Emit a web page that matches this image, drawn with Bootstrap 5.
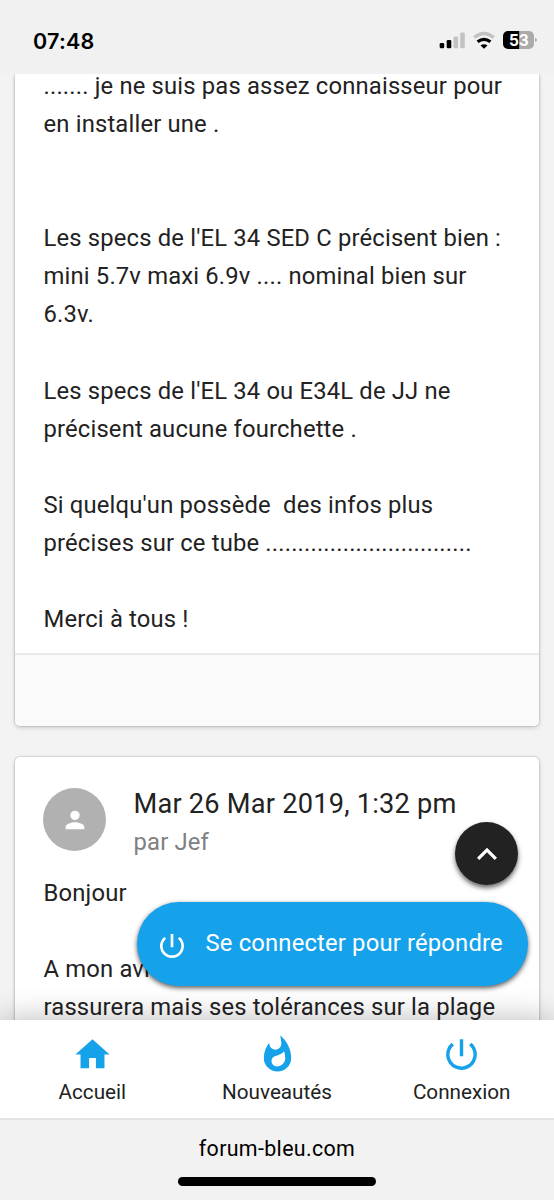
<!DOCTYPE html>
<html lang="fr">
<head>
<meta charset="utf-8">
<meta name="viewport" content="width=device-width, initial-scale=1">
<title>forum-bleu.com</title>
<link rel="stylesheet" href="https://cdn.jsdelivr.net/npm/bootstrap@5.3.0/dist/css/bootstrap.min.css">
<style>
body{font-family:Roboto,sans-serif;font-size:23.8px;line-height:38.06px;color:#222;background:#f3f3f3;letter-spacing:.17px}
.screen{height:1200px}
.statusbar{height:74px;background:#f1f1f1;padding:0 17px 0 33px;font-family:Inter,sans-serif}
.clock{font-size:21.5px;font-weight:600;color:#000;letter-spacing:.25px;padding-top:22px}
.status-icons{margin-top:20px}
.feed{padding:0 15px;height:946px}
.post{border-radius:5px;box-shadow:0 0 0 1px rgba(0,0,0,.05),0 0 3px rgba(0,0,0,.14),0 2px 5px rgba(0,0,0,.14)}
.post-first{height:652px;border-top-left-radius:0;border-top-right-radius:0}
.post-text{padding:0 10px 0 28.500px;white-space:pre-line}
.first-text{margin-top:-7px}
.post-foot{height:73px;background:#fafafa;border-top:2px solid #e9e9e9;border-radius:0 0 5px 5px}
.post-next{margin-top:31px;height:320px}
.post-head{padding:27px 28px 0}
.next-text{margin-top:13px}
.avatar{width:63px;height:63px;background:#b1b1b1}
.meta{margin-left:27.500px}
.date{font-size:27.200px;line-height:40px;letter-spacing:.22px}
.author{color:#808080;line-height:37px}
.fab-top{right:36px;top:822px;width:63px;height:63px;background:#222;box-shadow:0 3px 5px rgba(0,0,0,.6)}
.fab-login{left:137px;top:902px;width:391px;height:84px;background:#16a2ea;box-shadow:0 2px 5px rgba(0,0,0,.65);padding-left:19px}
.fab-login svg{margin-top:3px}
.login-label{margin-left:17.500px;padding-bottom:2px}
.tabs{height:100px;border-bottom:2px solid #e3e3e3;box-shadow:0 0 30px rgba(0,0,0,.28);font-size:20.700px;line-height:24px;letter-spacing:0;padding-top:13.500px}
.tabs svg{display:block;margin:0 auto 5px}
.browserbar{height:80px;background:#f2f2f2;color:#000}
.site{font-size:21.400px;line-height:24px;padding-top:17px;letter-spacing:.35px}
.homebar{width:198px;height:9px;background:#000;margin-top:16px}
</style>
</head>
<body>
<div class="screen position-relative overflow-hidden d-flex flex-column">
<header class="statusbar d-flex justify-content-between flex-shrink-0">
<span class="clock">07:48</span>
<svg class="status-icons" width="99" height="40" viewBox="438 20 99 40">
<g><rect x="439.700" y="43" width="4.500" height="5.300" rx="1.300"/><rect x="446.700" y="40" width="4.600" height="8.300" rx="1.300"/><g fill="#c2c2c2"><rect x="453.500" y="36.500" width="4.600" height="11.800" rx="1.300"/><rect x="460.200" y="32.500" width="4.600" height="15.800" rx="1.300"/></g></g>
<g fill="none" stroke-width="3.200"><path stroke="#c2c2c2" d="M474.300 37.500q9.700-8 19.400 0"/><path stroke="#000" d="M477.600 41.800q6.400-5 12.800 0"/></g><path d="M480.500 45.400q3.500-2.500 7 0L484 48.800z"/>
<path d="M519.500 31H508a5 5 0 0 0-5 5v8a5 5 0 0 0 5 5h11.500z"/><path fill="#ababab" d="M519.500 31h9.500a5 5 0 0 1 5 5v8a5 5 0 0 1-5 5h-9.500zM535 38q2 .5 2 2t-2 2z"/>
<text x="508.900" y="45.700" font-size="15.500" font-weight="700" fill="#fff" letter-spacing="0">53</text>
</svg>
</header>
<main class="feed overflow-hidden flex-shrink-0">
<article class="post post-first bg-white d-flex flex-column">
<div class="post-text first-text flex-grow-1">....... je ne suis pas assez connaisseur pour
en installer une .


Les specs de l'EL 34 SED C précisent bien :
mini 5.7v maxi 6.9v .... nominal bien sur
6.3v.

Les specs de l'EL 34 ou E34L de JJ ne
précisent aucune fourchette .

Si quelqu'un possède&nbsp; des infos plus
précises sur ce tube ................................

Merci à tous !</div>
<div class="post-foot flex-shrink-0"></div>
</article>
<article class="post post-next bg-white">
<div class="post-head d-flex">
<div class="avatar rounded-circle d-flex align-items-center justify-content-center mt-1"><svg width="28" height="28" viewBox="0 0 24 24" fill="#fff"><path d="M12 12a4 4 0 1 0 0-8 4 4 0 0 0 0 8zm0 2c-2.670 0-8 1.340-8 4v2h16v-2c0-2.660-5.330-4-8-4z"/></svg></div>
<div class="meta"><div class="date">Mar 26 Mar 2019, 1:32 pm</div><div class="author">par Jef</div></div>
</div>
<div class="post-text next-text">Bonjour

A mon avis
rassurera mais ses tolérances sur la plage</div>
</article>
</main>
<button class="fab-top position-absolute border-0 rounded-circle d-flex align-items-center justify-content-center p-0" aria-label="Haut"><svg width="40" height="40" viewBox="0 0 24 24" fill="#fff"><path d="M7.400 15.600 12 11l4.600 4.600L18 14.200l-6-6-6 6z"/></svg></button>
<a href="#" class="fab-login position-absolute rounded-pill text-white text-decoration-none d-flex align-items-center"><svg width="32" height="32" viewBox="0 0 24 24" fill="#fff"><path d="M13 3h-2v10h2V3zm4.830 2.170-1.420 1.420A6.920 6.920 0 0 1 19 12a7 7 0 1 1-11.420-5.420L6.170 5.170A9 9 0 1 0 21 12c0-2.740-1.230-5.180-3.170-6.830z"/></svg><span class="login-label">Se connecter pour répondre</span></a>
<nav class="tabs row g-0 bg-white text-center flex-shrink-0 position-relative">
<div class="col"><svg width="41" height="41" viewBox="0 0 24 24" fill="#16a2ea"><path d="M10 20v-6h4v6h5v-8h3L12 3 2 12h3v8z"/></svg><div>Accueil</div></div>
<div class="col"><svg width="41" height="41" viewBox="0 0 24 24" fill="#16a2ea"><path d="M13.500.67s.74 2.650.74 4.800c0 2.060-1.350 3.730-3.410 3.730-2.070 0-3.630-1.670-3.630-3.730l.03-.36C5.210 7.510 4 10.620 4 14a8 8 0 0 0 16 0C20 8.610 17.410 3.800 13.500.67zM11.710 19c-1.780 0-3.220-1.400-3.220-3.140 0-1.620 1.050-2.760 2.810-3.120 1.770-.36 3.600-1.210 4.620-2.580.39 1.290.59 2.650.59 4.040 0 2.650-2.150 4.800-4.800 4.800z"/></svg><div>Nouveautés</div></div>
<div class="col"><svg width="41" height="41" viewBox="0 0 24 24" fill="#16a2ea"><path d="M13 3h-2v10h2V3zm4.830 2.170-1.420 1.420A6.920 6.920 0 0 1 19 12a7 7 0 1 1-11.420-5.420L6.170 5.170A9 9 0 1 0 21 12c0-2.740-1.230-5.180-3.170-6.830z"/></svg><div>Connexion</div></div>
</nav>
<footer class="browserbar position-relative d-flex flex-column align-items-center flex-shrink-0"><div class="site">forum-bleu.com</div><div class="homebar rounded-pill"></div></footer>
</div>
<script src="https://cdn.jsdelivr.net/npm/bootstrap@5.3.0/dist/js/bootstrap.bundle.min.js"></script>
</body>
</html>
